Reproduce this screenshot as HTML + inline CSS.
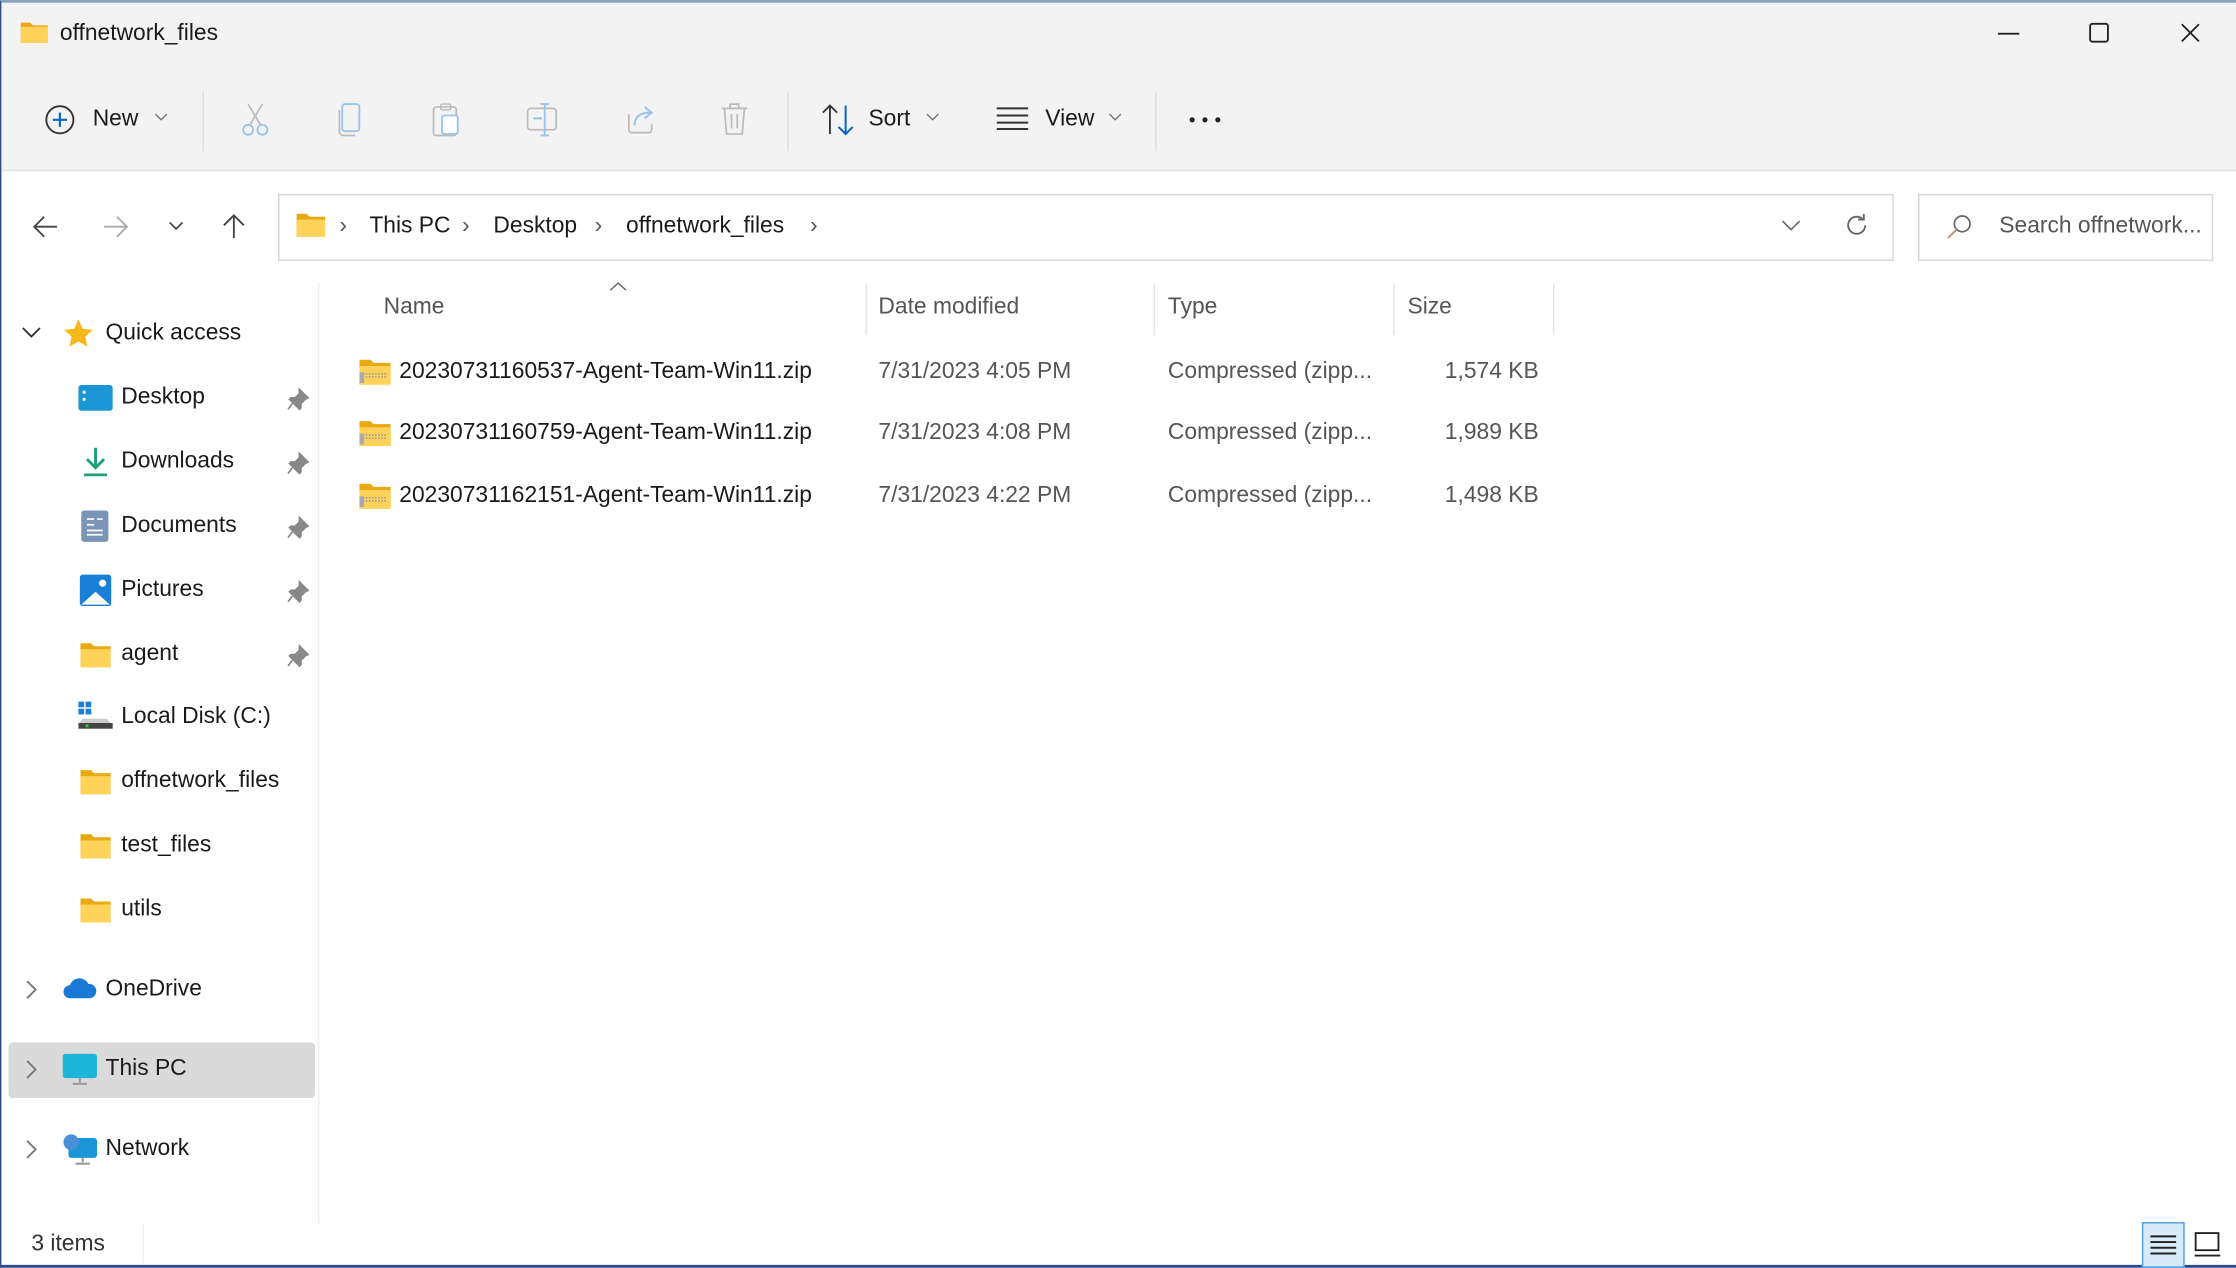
<!DOCTYPE html>
<html><head><meta charset="utf-8"><style>
*{margin:0;padding:0;box-sizing:border-box}
html,body{width:2236px;height:1268px;overflow:hidden;background:#fff}
#w{position:absolute;left:0;top:0;width:1568px;height:889px;transform:scale(1.42602);transform-origin:0 0;font-family:"Liberation Sans",sans-serif;font-size:16px;color:#1a1a1a;background:#fff;border-left:1px solid #2a4a8a;border-top:2px solid #8aa4c0;border-bottom:2px solid #2a4a8a}
.a{position:absolute;white-space:nowrap;line-height:20px}
.g{color:#555}
svg{position:absolute;overflow:visible}
.f{position:absolute;width:22px;height:17px}
</style></head><body><div id="w">
<div style="position:absolute;left:0;top:0;width:1568px;height:118px;background:#f3f3f3;border-bottom:1px solid #e3e3e3"></div>
<!-- title -->
<svg class="f" style="left:12px;top:12px" width="22" height="18" viewBox="0 0 22 18"><path d="M1 2h7l2 2h11v13H1z" fill="#e8a912"/><rect x="1" y="5" width="20" height="12" rx="1" fill="#ffd35a"/></svg>
<div class="a" style="left:41px;top:12px">offnetwork_files</div>
<svg style="left:1400px;top:21px" width="16" height="2"><rect width="15" height="1.3" fill="#222"/></svg>
<svg style="left:1464px;top:14px" width="14" height="14"><rect x=".7" y=".7" width="12.5" height="12.5" rx="1.5" fill="none" stroke="#222" stroke-width="1.3"/></svg>
<svg style="left:1528px;top:14px" width="14" height="14"><path d="M1 1l12 12M13 1L1 13" stroke="#222" stroke-width="1.3"/></svg>
<!-- toolbar -->
<svg style="left:30px;top:71px" width="22" height="22"><circle cx="11" cy="11" r="9.5" fill="none" stroke="#333" stroke-width="1.3"/><path d="M11 6v10M6 11h10" stroke="#0a64c8" stroke-width="1.5"/></svg>
<div class="a" style="left:64px;top:72px">New</div>
<svg style="left:108px;top:78px" width="8" height="5"><path d="M0 0l4 4 4-4" fill="none" stroke="#777"/></svg>
<div style="position:absolute;left:141px;top:62px;width:1px;height:42px;background:#ddd"></div>
<svg style="left:168px;top:70px" width="20" height="24"><path d="M5 1l9 15M15 1L6 16" stroke="#bbb" stroke-width="1.2"/><circle cx="5" cy="19" r="3.5" fill="none" stroke="#9cc3ea" stroke-width="1.3"/><circle cx="15" cy="19" r="3.5" fill="none" stroke="#9cc3ea" stroke-width="1.3"/></svg>
<svg style="left:236px;top:70px" width="18" height="24"><rect x="3" y="1" width="12" height="19" rx="2" fill="none" stroke="#9cc3ea" stroke-width="1.3"/><path d="M1 5v15a3 3 0 003 3h8" fill="none" stroke="#bbb" stroke-width="1.2"/></svg>
<svg style="left:302px;top:69px" width="20" height="25"><rect x="1" y="4" width="16" height="20" rx="2" fill="none" stroke="#bbb" stroke-width="1.2"/><rect x="6" y="2" width="7" height="4" rx="1" fill="none" stroke="#bbb"/><rect x="7" y="10" width="11" height="13" rx="1.5" fill="#fff" stroke="#9cc3ea" stroke-width="1.3"/></svg>
<svg style="left:368px;top:70px" width="24" height="24"><rect x="1" y="4" width="20" height="15" rx="2" fill="none" stroke="#bbb" stroke-width="1.2"/><path d="M13 1v22M10 1h6M10 23h6" stroke="#9cc3ea" stroke-width="1.3"/><path d="M5 11h6" stroke="#9cc3ea" stroke-width="1.5"/></svg>
<svg style="left:437px;top:69px" width="22" height="24"><path d="M3 9v11a2 2 0 002 2h12a2 2 0 002-2v-4" fill="none" stroke="#bbb" stroke-width="1.2"/><path d="M7 17c0-7 5-9 11-9M14 4l5 4-5 4" fill="none" stroke="#9cc3ea" stroke-width="1.4"/></svg>
<svg style="left:504px;top:69px" width="20" height="25"><path d="M1 5h18M7 5V2h6v3M3 5l1.5 18h11L17 5M8 9v10M12 9v10" fill="none" stroke="#bbb" stroke-width="1.2"/></svg>
<div style="position:absolute;left:551px;top:62px;width:1px;height:42px;background:#ddd"></div>
<svg style="left:575px;top:71px" width="24" height="22"><path d="M6 21V1M1 6l5-5 5 5" fill="none" stroke="#333" stroke-width="1.3"/><path d="M17 1v20M12 16l5 5 5-5" fill="none" stroke="#0a64c8" stroke-width="1.4"/></svg>
<div class="a" style="left:608px;top:72px">Sort</div>
<svg style="left:649px;top:78px" width="8" height="5"><path d="M0 0l4 4 4-4" fill="none" stroke="#777"/></svg>
<svg style="left:698px;top:73px" width="22" height="16"><path d="M0 1h22M0 6h22M0 11h22M0 15.5h22" stroke="#333" stroke-width="1.4"/></svg>
<div class="a" style="left:732px;top:72px">View</div>
<svg style="left:777px;top:78px" width="8" height="5"><path d="M0 0l4 4 4-4" fill="none" stroke="#777"/></svg>
<div style="position:absolute;left:809px;top:62px;width:1px;height:42px;background:#ddd"></div>
<svg style="left:833px;top:80px" width="24" height="4"><circle cx="2" cy="2" r="1.8" fill="#222"/><circle cx="11" cy="2" r="1.8" fill="#222"/><circle cx="20" cy="2" r="1.8" fill="#222"/></svg>
<!-- nav -->
<svg style="left:22px;top:149px" width="18" height="16"><path d="M17 8H2M8 1L1 8l7 7" fill="none" stroke="#444" stroke-width="1.3"/></svg>
<svg style="left:71px;top:149px" width="18" height="16"><path d="M1 8h15M10 1l7 7-7 7" fill="none" stroke="#aaa" stroke-width="1.3"/></svg>
<svg style="left:118px;top:154px" width="9" height="5"><path d="M0 0l4.5 4.5L9 0" fill="none" stroke="#444" stroke-width="1.2"/></svg>
<svg style="left:155px;top:147px" width="16" height="18"><path d="M8 18V2M1 9l7-7 7 7" fill="none" stroke="#444" stroke-width="1.3"/></svg>
<div style="position:absolute;left:194px;top:134px;width:1133px;height:47px;border:1px solid #d6d6d6;background:#fff"></div>
<svg style="left:206px;top:147px" width="22" height="18" viewBox="0 0 22 18"><path d="M1 1h7l2 2h11v14H1z" fill="#e8a912"/><rect x="1" y="5" width="20" height="12" rx="1" fill="#ffd35a"/></svg>
<div class="a g" style="left:237px;top:147px">›</div>
<div class="a" style="left:258px;top:147px">This PC</div>
<div class="a g" style="left:323px;top:147px">›</div>
<div class="a" style="left:345px;top:147px">Desktop</div>
<div class="a g" style="left:416px;top:147px">›</div>
<div class="a" style="left:438px;top:147px">offnetwork_files</div>
<div class="a g" style="left:567px;top:147px">›</div>
<svg style="left:1249px;top:153px" width="12" height="6"><path d="M0 0l6 6 6-6" fill="none" stroke="#666" stroke-width="1.1"/></svg>
<svg style="left:1292px;top:147px" width="18" height="18"><path d="M15 9a6 6 0 11-2-4.5M14 1v4h-4" fill="none" stroke="#666" stroke-width="1.3"/></svg>
<div style="position:absolute;left:1344px;top:134px;width:207px;height:47px;border:1px solid #d6d6d6;background:#fff"></div>
<svg style="left:1364px;top:148px" width="18" height="18"><circle cx="11" cy="7" r="5.5" fill="none" stroke="#666" stroke-width="1.2"/><path d="M7 11l-6 6" stroke="#c87" stroke-width="1.3"/></svg>
<div class="a g" style="left:1401px;top:147px">Search offnetwork...</div>
<!-- sidebar -->
<div style="position:absolute;left:222px;top:196px;width:1px;height:660px;background:#eee"></div>
<svg style="left:15px;top:228px" width="12" height="7"><path d="M0 0l6 6 6-6" fill="none" stroke="#333" stroke-width="1.3"/></svg>
<svg style="left:43px;top:221px" width="22" height="22"><path d="M11 1l3 6.5 7 .8-5.2 4.8 1.5 7L11 16.5 4.7 20l1.5-7L1 8.3l7-.8z" fill="#f7b819"/></svg>
<div class="a" style="left:73px;top:222px">Quick access</div>
<!-- desktop -->
<svg style="left:54px;top:268px" width="24" height="18"><rect width="24" height="18" rx="2" fill="#1a95d6"/><rect x="3" y="4" width="2" height="2" fill="#fff"/><rect x="3" y="9" width="2" height="2" fill="#fff"/></svg>
<div class="a" style="left:84px;top:267px">Desktop</div>
<svg style="left:57px;top:311px" width="18" height="22"><path d="M9 1v14M3 9l6 6 6-6" fill="none" stroke="#18a07a" stroke-width="2"/><path d="M1 20h16" stroke="#18a07a" stroke-width="2"/></svg>
<div class="a" style="left:84px;top:312px">Downloads</div>
<svg style="left:56px;top:356px" width="20" height="22"><rect width="19" height="22" rx="2" fill="#7a95b8"/><path d="M4 6h5M4 10h5M11 6h4M4 14h11M4 17h11" stroke="#fff" stroke-width="1.2"/></svg>
<div class="a" style="left:84px;top:357px">Documents</div>
<svg style="left:55px;top:401px" width="22" height="22"><rect width="22" height="22" rx="2" fill="#1a7fd6"/><path d="M1 21l10-9 10 9z" fill="#fff"/><circle cx="16" cy="6" r="2.5" fill="#fff"/></svg>
<div class="a" style="left:84px;top:402px">Pictures</div>
<svg style="left:54px;top:448px" width="24" height="19" viewBox="0 0 22 18"><path d="M1 1h7l2 2h11v14H1z" fill="#e8a912"/><rect x="1" y="5" width="20" height="12" rx="1" fill="#ffd35a"/></svg>
<div class="a" style="left:84px;top:447px">agent</div>
<svg style="left:54px;top:490px" width="24" height="20"><rect x="0" y="0" width="4" height="4" fill="#1a7fd6"/><rect x="5" y="0" width="4" height="4" fill="#1a7fd6"/><rect x="0" y="5" width="4" height="4" fill="#1a7fd6"/><rect x="5" y="5" width="4" height="4" fill="#1a7fd6"/><path d="M3 12h17l3 4H0z" fill="#ccc"/><rect x="0" y="15" width="24" height="4" fill="#444"/><rect x="5" y="16" width="2" height="2" fill="#3c3"/></svg>
<div class="a" style="left:84px;top:491px">Local Disk (C:)</div>
<svg style="left:54px;top:537px" width="24" height="19" viewBox="0 0 22 18"><path d="M1 1h7l2 2h11v14H1z" fill="#e8a912"/><rect x="1" y="5" width="20" height="12" rx="1" fill="#ffd35a"/></svg>
<div class="a" style="left:84px;top:536px">offnetwork_files</div>
<svg style="left:54px;top:582px" width="24" height="19" viewBox="0 0 22 18"><path d="M1 1h7l2 2h11v14H1z" fill="#e8a912"/><rect x="1" y="5" width="20" height="12" rx="1" fill="#ffd35a"/></svg>
<div class="a" style="left:84px;top:581px">test_files</div>
<svg style="left:54px;top:627px" width="24" height="19" viewBox="0 0 22 18"><path d="M1 1h7l2 2h11v14H1z" fill="#e8a912"/><rect x="1" y="5" width="20" height="12" rx="1" fill="#ffd35a"/></svg>
<div class="a" style="left:84px;top:626px">utils</div>
<!-- pins -->
<svg style="left:200px;top:270px" width="16" height="16"><path d="M9 1l6 6-2 1-3 3v3l-1 1-7-7 1-1h3l3-3z M4 11l-3 4" fill="#888" stroke="#888" stroke-width="1.2"/></svg>
<svg style="left:200px;top:315px" width="16" height="16"><path d="M9 1l6 6-2 1-3 3v3l-1 1-7-7 1-1h3l3-3z M4 11l-3 4" fill="#888" stroke="#888" stroke-width="1.2"/></svg>
<svg style="left:200px;top:360px" width="16" height="16"><path d="M9 1l6 6-2 1-3 3v3l-1 1-7-7 1-1h3l3-3z M4 11l-3 4" fill="#888" stroke="#888" stroke-width="1.2"/></svg>
<svg style="left:200px;top:405px" width="16" height="16"><path d="M9 1l6 6-2 1-3 3v3l-1 1-7-7 1-1h3l3-3z M4 11l-3 4" fill="#888" stroke="#888" stroke-width="1.2"/></svg>
<svg style="left:200px;top:450px" width="16" height="16"><path d="M9 1l6 6-2 1-3 3v3l-1 1-7-7 1-1h3l3-3z M4 11l-3 4" fill="#888" stroke="#888" stroke-width="1.2"/></svg>
<!-- onedrive etc -->
<svg style="left:18px;top:686px" width="7" height="12"><path d="M0 0l6 6-6 6" fill="none" stroke="#777" stroke-width="1.3"/></svg>
<svg style="left:43px;top:684px" width="24" height="15"><path d="M5 14a4.5 4.5 0 010-9 7 7 0 0113-1 5 5 0 011 10z" fill="#1a78d6"/></svg>
<div class="a" style="left:73px;top:682px">OneDrive</div>
<div style="position:absolute;left:5px;top:729px;width:215px;height:39px;background:#dadada;border-radius:3px"></div>
<svg style="left:18px;top:742px" width="7" height="12"><path d="M0 0l6 6-6 6" fill="none" stroke="#777" stroke-width="1.3"/></svg>
<svg style="left:43px;top:737px" width="24" height="22"><rect width="24" height="17" rx="2" fill="#1db5d8"/><path d="M12 17v3M7 21h10" stroke="#999" stroke-width="1.5"/></svg>
<div class="a" style="left:73px;top:738px">This PC</div>
<svg style="left:18px;top:798px" width="7" height="12"><path d="M0 0l6 6-6 6" fill="none" stroke="#777" stroke-width="1.3"/></svg>
<svg style="left:43px;top:793px" width="24" height="22"><rect x="4" y="3" width="20" height="14" rx="2" fill="#1a95d6"/><circle cx="6" cy="6" r="5.5" fill="#4a8ed8"/><path d="M14 17v3M9 21h10" stroke="#999" stroke-width="1.5"/></svg>
<div class="a" style="left:73px;top:794px">Network</div>
<!-- headers -->
<svg style="left:427px;top:196px" width="11" height="6"><path d="M0 5.5l5.5-5 5.5 5" fill="none" stroke="#666"/></svg>
<div class="a g" style="left:268px;top:204px">Name</div>
<div class="a g" style="left:615px;top:204px">Date modified</div>
<div class="a g" style="left:818px;top:204px">Type</div>
<div class="a g" style="left:986px;top:204px">Size</div>
<div style="position:absolute;left:606px;top:197px;width:1px;height:36px;background:#e5e5e5"></div>
<div style="position:absolute;left:808px;top:197px;width:1px;height:36px;background:#e5e5e5"></div>
<div style="position:absolute;left:976px;top:197px;width:1px;height:36px;background:#e5e5e5"></div>
<div style="position:absolute;left:1088px;top:197px;width:1px;height:36px;background:#e5e5e5"></div>
<!-- rows -->
<svg style="left:250px;top:249px" width="24" height="20" viewBox="0 0 22 18"><path d="M1 1h7l2 2h11v14H1z" fill="#e8a912"/><rect x="1" y="5" width="20" height="12" rx="1" fill="#ffd35a"/><path d="M1 10h18M1 12h18" stroke="#999" stroke-dasharray="1 1"/><rect x="1" y="9" width="3" height="7" fill="#aaa"/></svg>
<div class="a" style="left:279px;top:249px">20230731160537-Agent-Team-Win11.zip</div>
<div class="a g" style="left:615px;top:249px">7/31/2023 4:05 PM</div>
<div class="a g" style="left:818px;top:249px">Compressed (zipp...</div>
<div class="a g" style="left:978px;top:249px;width:100px;text-align:right">1,574 KB</div>
<svg style="left:250px;top:292px" width="24" height="20" viewBox="0 0 22 18"><path d="M1 1h7l2 2h11v14H1z" fill="#e8a912"/><rect x="1" y="5" width="20" height="12" rx="1" fill="#ffd35a"/><path d="M1 10h18M1 12h18" stroke="#999" stroke-dasharray="1 1"/><rect x="1" y="9" width="3" height="7" fill="#aaa"/></svg>
<div class="a" style="left:279px;top:292px">20230731160759-Agent-Team-Win11.zip</div>
<div class="a g" style="left:615px;top:292px">7/31/2023 4:08 PM</div>
<div class="a g" style="left:818px;top:292px">Compressed (zipp...</div>
<div class="a g" style="left:978px;top:292px;width:100px;text-align:right">1,989 KB</div>
<svg style="left:250px;top:336px" width="24" height="20" viewBox="0 0 22 18"><path d="M1 1h7l2 2h11v14H1z" fill="#e8a912"/><rect x="1" y="5" width="20" height="12" rx="1" fill="#ffd35a"/><path d="M1 10h18M1 12h18" stroke="#999" stroke-dasharray="1 1"/><rect x="1" y="9" width="3" height="7" fill="#aaa"/></svg>
<div class="a" style="left:279px;top:336px">20230731162151-Agent-Team-Win11.zip</div>
<div class="a g" style="left:615px;top:336px">7/31/2023 4:22 PM</div>
<div class="a g" style="left:818px;top:336px">Compressed (zipp...</div>
<div class="a g" style="left:978px;top:336px;width:100px;text-align:right">1,498 KB</div>
<!-- status -->
<div class="a" style="left:21px;top:861px;color:#333">3 items</div>
<div style="position:absolute;left:99px;top:856px;width:1px;height:28px;background:#eee"></div>
<div style="position:absolute;left:1501px;top:855px;width:30px;height:32px;background:#d8ebf8;border:1px solid #4aa0e0"></div>
<svg style="left:1507px;top:864px" width="18" height="14"><path d="M0 1h18M0 5h18M0 9h18M0 13h18" stroke="#222" stroke-width="1.4"/></svg>
<svg style="left:1538px;top:862px" width="18" height="18"><rect x=".7" y=".7" width="16" height="12" fill="none" stroke="#222" stroke-width="1.3"/><path d="M0 16.5h18" stroke="#222" stroke-width="1.3"/></svg>
</div></body></html>
